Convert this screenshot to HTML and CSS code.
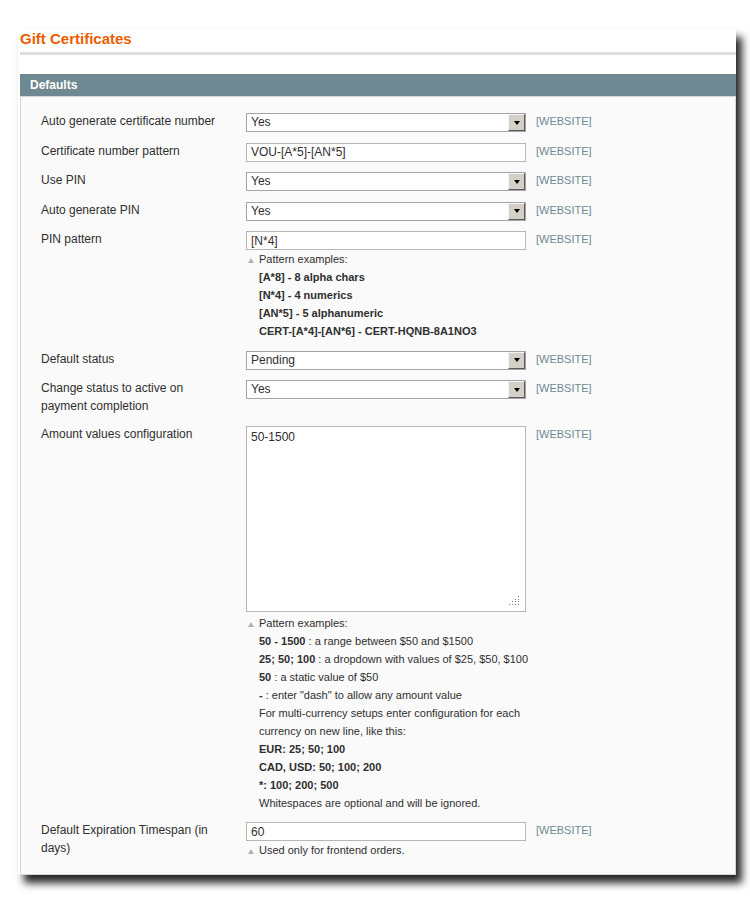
FILE: index.html
```html
<!DOCTYPE html>
<html lang="en">
<head>
<meta charset="UTF-8" />
<title>Gift Certificates</title>
<link rel="stylesheet" href="styles.css">
</head>
<body>
  <div class="page">
    <h3 class="page-title">Gift Certificates</h3>
    <div class="title-rule"></div>

    <div class="section-head">Defaults</div>
    <div class="config">

      <div class="row">
        <label class="label">Auto generate certificate number</label>
        <div class="value">
          <div class="select"><span class="select-text">Yes</span><span class="select-btn"></span></div>
        </div>
        <div class="scope">[WEBSITE]</div>
      </div>

      <div class="row">
        <label class="label">Certificate number pattern</label>
        <div class="value">
          <input class="input-text" type="text" value="VOU-[A*5]-[AN*5]" />
        </div>
        <div class="scope">[WEBSITE]</div>
      </div>

      <div class="row">
        <label class="label">Use PIN</label>
        <div class="value">
          <div class="select"><span class="select-text">Yes</span><span class="select-btn"></span></div>
        </div>
        <div class="scope">[WEBSITE]</div>
      </div>

      <div class="row">
        <label class="label">Auto generate PIN</label>
        <div class="value">
          <div class="select"><span class="select-text">Yes</span><span class="select-btn"></span></div>
        </div>
        <div class="scope">[WEBSITE]</div>
      </div>

      <div class="row">
        <label class="label">PIN pattern</label>
        <div class="value">
          <input class="input-text" type="text" value="[N*4]" />
          <div class="note">
            <p class="note-title">Pattern examples:</p>
            <p><strong>[A*8] - 8 alpha chars</strong></p>
            <p><strong>[N*4] - 4 numerics</strong></p>
            <p><strong>[AN*5] - 5 alphanumeric</strong></p>
            <p><strong>CERT-[A*4]-[AN*6] - CERT-HQNB-8A1NO3</strong></p>
          </div>
        </div>
        <div class="scope">[WEBSITE]</div>
      </div>

      <div class="row">
        <label class="label">Default status</label>
        <div class="value">
          <div class="select"><span class="select-text">Pending</span><span class="select-btn"></span></div>
        </div>
        <div class="scope">[WEBSITE]</div>
      </div>

      <div class="row">
        <label class="label">Change status to active on payment completion</label>
        <div class="value">
          <div class="select"><span class="select-text">Yes</span><span class="select-btn"></span></div>
        </div>
        <div class="scope">[WEBSITE]</div>
      </div>

      <div class="row">
        <label class="label">Amount values configuration</label>
        <div class="value">
          <div class="textarea-wrap">
            <textarea class="textarea">50-1500</textarea>
            <svg class="grip" width="11" height="11" viewBox="0 0 11 11">
              <g fill="#7a7a7a">
                <rect x="9" y="0" width="1" height="1" />
                <rect x="6" y="3" width="1" height="1" /><rect x="9" y="3" width="1" height="1" />
                <rect x="3" y="5" width="1" height="1" /><rect x="6" y="5" width="1" height="1" /><rect x="9" y="5" width="1" height="1" />
                <rect x="0" y="8" width="1" height="1" /><rect x="3" y="8" width="1" height="1" /><rect x="6" y="8" width="1" height="1" /><rect x="9" y="8" width="1" height="1" />
              </g>
            </svg>
          </div>
          <div class="note">
            <p class="note-title">Pattern examples:</p>
            <p><strong>50 - 1500</strong> : a range between $50 and $1500</p>
            <p><strong>25; 50; 100</strong> : a dropdown with values of $25, $50, $100</p>
            <p><strong>50</strong> : a static value of $50</p>
            <p><strong>-</strong> : enter "dash" to allow any amount value</p>
            <p>For multi-currency setups enter configuration for each currency on new line, like this:</p>
            <p><strong>EUR: 25; 50; 100</strong></p>
            <p><strong>CAD, USD: 50; 100; 200</strong></p>
            <p><strong>*: 100; 200; 500</strong></p>
            <p>Whitespaces are optional and will be ignored.</p>
          </div>
        </div>
        <div class="scope">[WEBSITE]</div>
      </div>

      <div class="row">
        <label class="label">Default Expiration Timespan (in days)</label>
        <div class="value">
          <input class="input-text" type="text" value="60" />
          <div class="note">
            <p class="note-title">Used only for frontend orders.</p>
          </div>
        </div>
        <div class="scope">[WEBSITE]</div>
      </div>

    </div>
  </div>
</body>
</html>
```

FILE: styles.css
```css
body {
  margin: 0;
  background: #fff;
  font-family: "Liberation Sans", Arial, sans-serif;
  font-size: 12px;
  color: #2f2f2f;
}
.page {
  width: 716px;
  margin: 29px 0 40px 18px;
  padding-left: 2px;
  background: #fff;
  box-shadow: 6px 8px 8px rgba(0,0,0,0.85);
}
.page-title {
  margin: 0;
  font-size: 15px;
  line-height: 20px;
  font-weight: bold;
  color: #eb5e00;
}
.title-rule {
  height: 3px;
  margin-top: 3px;
  background: #dddddd;
}
.section-head {
  margin-top: 19px;
  height: 22px;
  line-height: 22px;
  padding-left: 10px;
  background: #6f8992;
  color: #fff;
  font-weight: bold;
  border-bottom: 1px solid #d6d6d6;
}
.config {
  display: flex;
  flex-direction: column;
  gap: 9.5px;
  background: #fafafa;
  border: 1px solid #d6d6d6;
  border-top: none;
  padding: 15px 10px 15px 20px;
}
.row {
  display: grid;
  grid-template-columns: 205px 280px 1fr;
}
.label {
  padding-right: 24px;
  line-height: 18px;
}
.value {
  padding-top: 1px;
}
.scope {
  padding-left: 10px;
  font-size: 11px;
  line-height: 18px;
  color: #6f8992;
}
.select {
  display: flex;
  height: 19px;
  box-sizing: border-box;
  border: 1px solid #a4a4a4;
  background: #fff;
}
.select-text {
  flex: 1;
  padding-left: 4px;
  line-height: 17px;
}
.select-btn {
  width: 17px;
  box-sizing: border-box;
  background: #d4d0c8;
  border-top: 1px solid #f4f4f4;
  border-left: 1px solid #f4f4f4;
  border-right: 1px solid #5a5a5a;
  border-bottom: 1px solid #5a5a5a;
  display: flex;
  align-items: center;
  justify-content: center;
}
.select-btn::after {
  content: "";
  border-left: 3.5px solid transparent;
  border-right: 3.5px solid transparent;
  border-top: 4px solid #000;
}
.input-text {
  display: block;
  width: 280px;
  height: 19px;
  box-sizing: border-box;
  margin: 0;
  padding: 0 4px;
  border: 1px solid #b6b6b6;
  background: #fff;
  font: 12px "Liberation Sans", Arial, sans-serif;
  color: #2f2f2f;
}
.textarea-wrap {
  position: relative;
  width: 280px;
  height: 186px;
  margin-bottom: 2px;
}
.textarea {
  display: block;
  width: 100%;
  height: 100%;
  box-sizing: border-box;
  margin: 0;
  padding: 3px 4px;
  border: 1px solid #b6b6b6;
  background: #fff;
  resize: none;
  font: 12px/15px "Liberation Sans", Arial, sans-serif;
  color: #2f2f2f;
}
.grip {
  position: absolute;
  right: 6px;
  bottom: 5px;
}
.note {
  width: 292px;
  box-sizing: border-box;
  padding-left: 13px;
  font-size: 11px;
  line-height: 18px;
}
.note p {
  margin: 0;
}
.note-title {
  position: relative;
}
.note-title::before {
  content: "";
  position: absolute;
  left: -11px;
  top: 8px;
  border-left: 3px solid transparent;
  border-right: 3px solid transparent;
  border-bottom: 5px solid #a9b3b9;
}
```
